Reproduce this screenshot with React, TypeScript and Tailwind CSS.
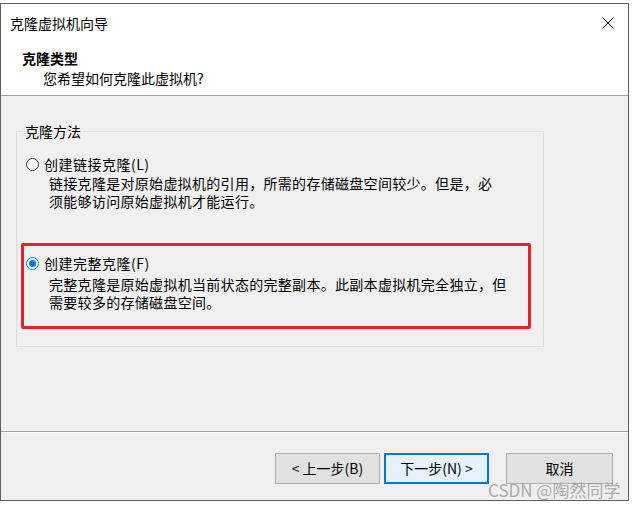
import React from 'react';

const FONT = "font-['Noto_Sans_CJK_SC',sans-serif]";

// Windows style radio button
const Radio = ({ checked }: { checked?: boolean }) => (
  <span
    className={`flex h-[13px] w-[13px] items-center justify-center rounded-full border bg-white ${
      checked ? 'border-[#0078d7]' : 'border-[#333333]'
    }`}
  >
    {checked && <span className="h-[7px] w-[7px] rounded-full bg-[#0078d7]" />}
  </span>
);

interface OptionProps {
  label: string;
  lines: string[];
  checked?: boolean;
}

const Option = ({ label, lines, checked }: OptionProps) => (
  <div>
    <div className="flex h-[20px] items-center">
      <Radio checked={checked} />
      <span className="ml-[5px] leading-[20px] tracking-[0.5px]">{label}</span>
    </div>
    <div className={`pl-[23px] leading-[18px] tracking-[0.3px] ${checked ? 'mt-[2px]' : ''}`}>
      {lines.map((line, i) => (
        <div key={i}>{line}</div>
      ))}
    </div>
  </div>
);

export default function App() {
  return (
    <div className={`relative h-[506px] w-[639px] bg-white text-[14px] text-black ${FONT}`}>
      <div className="mt-[3px] flex h-[498px] w-[629px] flex-col border border-[#5f5f5f]">
        {/* title + header */}
        <div className="h-[92px] border-b border-[#a0a0a0] bg-white">
          <div className="flex h-[38px] items-center justify-between pl-[9px] pr-[14px]">
            <span className="text-[14px]">克隆虚拟机向导</span>
            <svg width="12" height="12" viewBox="0 0 12 12">
              <path d="M0.5 0.5 L11.5 11.5 M11.5 0.5 L0.5 11.5" stroke="#111" strokeWidth="1" />
            </svg>
          </div>
          <div className="pl-[21px] pt-[6px]">
            <div className="font-bold leading-[20px]">克隆类型</div>
            <div className="pl-[21px] leading-[20px]">您希望如何克隆此虚拟机?</div>
          </div>
        </div>

        {/* body */}
        <div className="h-[336px] border-b border-[#a0a0a0] bg-[#f0f0f0] px-[15px] pt-[25px]">
          <fieldset className="h-[226px] w-[528px] border border-[#dcdcdc]">
            <legend className="ml-[6px] px-[2px] leading-[20px]">克隆方法</legend>
            <div className="pl-[9px] pt-[13px]">
              <Option
                label="创建链接克隆(L)"
                lines={[
                  '链接克隆是对原始虚拟机的引用，所需的存储磁盘空间较少。但是，必',
                  '须能够访问原始虚拟机才能运行。',
                ]}
              />
            </div>
            <div className="ml-[4px] mt-[33px] w-[510px] rounded-[2px] border-[3px] border-[#e8202a] pb-[15px] pl-[2px] pt-[7px]">
              <Option
                checked
                label="创建完整克隆(F)"
                lines={[
                  '完整克隆是原始虚拟机当前状态的完整副本。此副本虚拟机完全独立，但',
                  '需要较多的存储磁盘空间。',
                ]}
              />
            </div>
          </fieldset>
        </div>

        {/* buttons */}
        <div className="flex flex-1 justify-end border-t border-white bg-[#f0f0f0] pr-[15px] pt-[20px]">
          <button className="h-[31px] w-[105px] border border-[#adadad] bg-[#e1e1e1]">&lt; 上一步(B)</button>
          <button className="ml-[4px] h-[31px] w-[105px] border-2 border-[#0078d7] bg-[#e5f1fb]">下一步(N) &gt;</button>
          <button className="ml-[17px] h-[31px] w-[107px] border border-[#adadad] bg-[#e1e1e1]">取消</button>
        </div>
      </div>

      <div className="absolute left-[488px] top-[476px] text-[17px] leading-[22px] text-[#9a9a9a] opacity-80">
        CSDN @陶然同学
      </div>
    </div>
  );
}
